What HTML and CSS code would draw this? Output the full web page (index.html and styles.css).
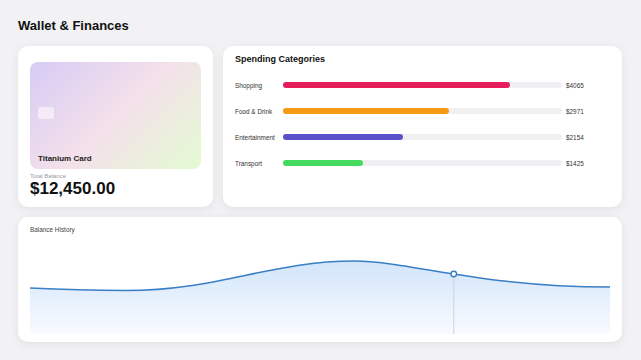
FILE: index.html
```html
<!DOCTYPE html>
<html lang="en">
<head>
    <meta charset="UTF-8">
    <meta name="viewport" content="width=device-width, initial-scale=1.0">
    <title>Wallet &amp; Finances</title>
    <link rel="stylesheet" href="styles.css">
</head>
<body>

<div class="page">
    <h1 class="page-title">Wallet &amp; Finances</h1>

    <div class="top-row">
        <div class="panel wallet">
            <div class="credit-card">
                <div class="chip"></div>
                <div class="card-name">Titanium Card</div>
            </div>
            <div class="balance-label">Total Balance</div>
            <div class="balance-value">$12,450.00</div>
        </div>

        <div class="panel spending">
            <h2 class="panel-title">Spending Categories</h2>
            <div class="cat-list">
                <div class="cat-row">
                    <span class="cat-name">Shopping</span>
                    <div class="track"><div class="fill shopping" style="width: 81.3%"></div></div>
                    <span class="cat-value">$4065</span>
                </div>
                <div class="cat-row">
                    <span class="cat-name">Food &amp; Drink</span>
                    <div class="track"><div class="fill food" style="width: 59.4%"></div></div>
                    <span class="cat-value">$2971</span>
                </div>
                <div class="cat-row">
                    <span class="cat-name">Entertainment</span>
                    <div class="track"><div class="fill fun" style="width: 43.1%"></div></div>
                    <span class="cat-value">$2154</span>
                </div>
                <div class="cat-row">
                    <span class="cat-name">Transport</span>
                    <div class="track"><div class="fill transport" style="width: 28.5%"></div></div>
                    <span class="cat-value">$1425</span>
                </div>
            </div>
        </div>
    </div>

    <div class="panel history">
        <div class="history-title">Balance History</div>
        <svg class="chart" viewBox="0 0 581 93" width="581" height="93">
            <defs>
                <linearGradient id="areaFill" x1="0" y1="0" x2="0" y2="1">
                    <stop offset="0" stop-color="#d2e5fa"/>
                    <stop offset="1" stop-color="#f8fbff"/>
                </linearGradient>
            </defs>
            <path d="M0,47 C30,48.5 60,49.5 95,49.5 C190,49.5 240,20 325,20 C380,20 450,46 581,46 L581,93 L0,93 Z" fill="url(#areaFill)"/>
            <line x1="424.5" y1="33" x2="424.5" y2="93" stroke="#cfd3da" stroke-width="1"/>
            <path d="M0,47 C30,48.5 60,49.5 95,49.5 C190,49.5 240,20 325,20 C380,20 450,46 581,46" fill="none" stroke="#3a7fc6" stroke-width="1.5"/>
            <circle cx="424.5" cy="33" r="2.8" fill="#fff" stroke="#3a7fc6" stroke-width="1.4"/>
        </svg>
    </div>
</div>

</body>
</html>
```

FILE: styles.css
```css
body {
    margin: 0;
    font-family: "Liberation Sans", Arial, sans-serif;
    background-color: #f2f2f4;
    color: #222;
}
.page {
    padding: 18px 19px 19px 18px;
}
.page-title {
    margin: 0 0 12px;
    font-size: 13px;
    line-height: 16px;
    font-weight: bold;
    color: #111;
}
.top-row {
    display: grid;
    grid-template-columns: 195px 1fr;
    gap: 10px;
    margin-bottom: 10px;
}
.panel {
    background-color: #fff;
    border-radius: 10px;
    box-shadow: 0 2px 10px rgba(0, 0, 0, 0.07);
}

/* wallet */
.wallet {
    padding: 16px 12px 8px;
}
.credit-card {
    height: 107px;
    box-sizing: border-box;
    border-radius: 8px;
    padding: 0 8px 5px;
    display: flex;
    flex-direction: column;
    background: linear-gradient(135deg, #d6cbf5 0%, #f4e0ea 50%, #e3fbd2 100%);
}
.chip {
    width: 16px;
    height: 12px;
    margin-top: 45px;
    border-radius: 2px;
    background-color: rgba(255, 255, 255, 0.55);
}
.card-name {
    margin-top: auto;
    font-size: 8px;
    line-height: 1.2;
    font-weight: bold;
    color: #1d1d22;
}
.balance-label {
    margin-top: 4px;
    font-size: 6px;
    line-height: 6px;
    color: #9a9a9f;
}
.balance-value {
    font-size: 17px;
    line-height: 1.15;
    font-weight: bold;
    color: #111;
}

/* spending */
.spending {
    padding: 8px 12px 10px;
}
.panel-title {
    margin: 0 0 7.5px;
    font-size: 9px;
    line-height: 1.2;
    font-weight: bold;
    color: #111;
}
.cat-row {
    display: grid;
    grid-template-columns: 48px 1fr 48px;
    align-items: center;
    height: 26px;
    font-size: 6.4px;
    color: #333;
}
.track {
    height: 6px;
    border-radius: 3px;
    background-color: #f0f0f2;
}
.fill {
    height: 100%;
    border-radius: 3px;
}
.shopping { background-color: #e51d5b; }
.food { background-color: #f49a15; }
.fun { background-color: #5a50c9; }
.transport { background-color: #45d95f; }
.cat-value {
    padding-left: 4px;
}

/* history */
.history {
    padding: 9px 12px 8px;
}
.history-title {
    font-size: 6.4px;
    line-height: 8px;
    color: #444;
    margin-bottom: 7px;
}
.chart {
    display: block;
    width: 100%;
    height: 93px;
}
```
